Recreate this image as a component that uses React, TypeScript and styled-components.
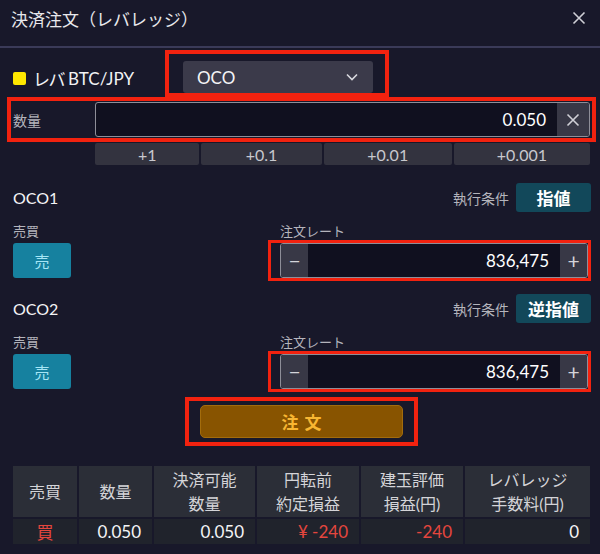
import * as React from 'react';
import styled, { createGlobalStyle } from 'styled-components';

const colors = {
  bg: '#18182a',
  line: '#3a3a58',
  text: '#e8e8ec',
  muted: '#b4b4bc',
  field: '#10101f',
  fieldBorder: '#8e8e98',
  control: '#383846',
  mark: '#f2220f',
  teal: '#12485a',
  sell: '#16819f',
  order: '#885400',
  loss: '#e4463e',
};

const GlobalStyle = createGlobalStyle`
  html, body {
    margin: 0;
    padding: 0;
    background: ${colors.bg};
  }
  body {
    font-family: Lato, 'Noto Sans CJK JP', sans-serif;
    color: ${colors.text};
  }
  * { box-sizing: border-box; }
`;

type Side = 'sell' | 'buy';

interface OcoLeg {
  name: string;
  condition: string;
  side: Side;
  rate: string;
}

const legs: OcoLeg[] = [
  { name: 'OCO1', condition: '指値', side: 'sell', rate: '836,475' },
  { name: 'OCO2', condition: '逆指値', side: 'sell', rate: '836,475' },
];

const steps = ['+1', '+0.1', '+0.01', '+0.001'];

const Close = () => (
  <svg width="14" height="14" viewBox="0 0 14 14">
    <path d="M1.5 1.5l11 11M12.5 1.5l-11 11" stroke="#cfcfd6" strokeWidth="1.6" />
  </svg>
);

const Chevron = () => (
  <svg width="12" height="8" viewBox="0 0 12 8">
    <path d="M1 1.5l5 5 5-5" stroke="#d8d8de" strokeWidth="1.6" fill="none" />
  </svg>
);

export default function App() {
  return (
    <Panel>
      <GlobalStyle />
      <Header>
        <Title>決済注文（レバレッジ）</Title>
        <CloseButton>
          <Close />
        </CloseButton>
      </Header>

      <SymbolRow>
        <Symbol>
          <Swatch />
          <span className="kana">レバ</span>
          <span>BTC/JPY</span>
        </Symbol>
        <Marked $pad="7px 12px 0 14px">
          <Select>
            OCO
            <Chevron />
          </Select>
        </Marked>
      </SymbolRow>

      <Marked $pad="1px 2px 1px 2px" $inset="0 4px 0 7px">
        <AmountRow>
          <FieldLabel>数量</FieldLabel>
          <Field>
            <FieldValue>0.050</FieldValue>
            <SideButton $wide>
              <Close />
            </SideButton>
          </Field>
        </AmountRow>
      </Marked>

      <Steps>
        {steps.map((s) => (
          <Step key={s}>{s}</Step>
        ))}
      </Steps>

      {legs.map((leg) => (
        <Leg key={leg.name}>
          <LegHead>
            <LegName>{leg.name}</LegName>
            <Condition>
              執行条件
              <ConditionButton>{leg.condition}</ConditionButton>
            </Condition>
          </LegHead>
          <LegBody>
            <Column>
              <SmallLabel>売買</SmallLabel>
              <SideToggle>{leg.side === 'sell' ? '売' : '買'}</SideToggle>
            </Column>
            <Column>
              <SmallLabel $indent>注文レート</SmallLabel>
              <Marked $pad="0 0 0 9px" $thin>
                <Field>
                  <SideButton>−</SideButton>
                  <FieldValue>{leg.rate}</FieldValue>
                  <SideButton>+</SideButton>
                </Field>
              </Marked>
            </Column>
          </LegBody>
        </Leg>
      ))}

      <OrderRow>
        <Marked $pad="4px 11px">
          <OrderButton>注文</OrderButton>
        </Marked>
      </OrderRow>

      <Positions>
        <colgroup>
          <col style={{ width: 65 }} />
          <col style={{ width: 75 }} />
          <col style={{ width: 103 }} />
          <col style={{ width: 104 }} />
          <col style={{ width: 104 }} />
          <col style={{ width: 126 }} />
        </colgroup>
        <thead>
          <tr>
            <th>売買</th>
            <th>数量</th>
            <th>
              決済可能
              <br />
              数量
            </th>
            <th>
              円転前
              <br />
              約定損益
            </th>
            <th>
              建玉評価
              <br />
              損益(円)
            </th>
            <th>
              レバレッジ
              <br />
              手数料(円)
            </th>
          </tr>
        </thead>
        <tbody>
          <tr>
            <Cell $center $loss>買</Cell>
            <Cell>0.050</Cell>
            <Cell>0.050</Cell>
            <Cell $loss>¥ -240</Cell>
            <Cell $loss>-240</Cell>
            <Cell>0</Cell>
          </tr>
        </tbody>
      </Positions>
    </Panel>
  );
}

const Panel = styled.div`
  width: 600px;
  height: 554px;
  background: ${colors.bg};
  overflow: hidden;
`;

const Header = styled.div`
  display: flex;
  align-items: center;
  justify-content: space-between;
  height: 48px;
  padding: 0 14px 10px 11px;
  border-bottom: 2px solid ${colors.line};
`;

const Title = styled.h1`
  margin: 0;
  font-size: 17px;
  font-weight: 400;
  color: ${colors.text};
`;

const CloseButton = styled.div`
  display: flex;
`;

const SymbolRow = styled.div`
  display: flex;
  align-items: flex-end;
  padding: 2px 0 0 13px;
  height: 49px;
`;

const Symbol = styled.div`
  width: 152px;
  display: flex;
  align-items: center;
  gap: 3px;
  align-self: center;
  margin-top: 10px;
  font-size: 17px;
  color: #f2f2f4;

  .kana {
    font-feature-settings: 'palt';
  }
`;

const Swatch = styled.span`
  width: 13px;
  height: 13px;
  border-radius: 2px;
  background: #ffe800;
  margin-right: 5px;
`;

const Marked = styled.div<{ $pad: string; $inset?: string; $thin?: boolean }>`
  border: ${(p) => (p.$thin ? 3 : 4)}px solid ${colors.mark};
  padding: ${(p) => p.$pad};
  margin: ${(p) => p.$inset ?? '0'};
`;

const Select = styled.div`
  width: 190px;
  height: 32px;
  display: flex;
  align-items: center;
  justify-content: space-between;
  padding: 0 15px 0 14px;
  border-radius: 3px;
  background: #3b3a4a;
  font-size: 17px;
  color: #f4f4f6;
`;

const AmountRow = styled.div`
  display: flex;
  align-items: center;
`;

const FieldLabel = styled.div`
  width: 82px;
  font-size: 14px;
  color: ${colors.muted};
`;

const Field = styled.div`
  flex: 1;
  height: 35px;
  display: flex;
  align-items: stretch;
  border: 1.5px solid ${colors.fieldBorder};
  border-radius: 3px;
  background: ${colors.field};
  overflow: hidden;
`;

const FieldValue = styled.div`
  flex: 1;
  display: flex;
  align-items: center;
  justify-content: flex-end;
  padding-right: 11px;
  font-size: 17px;
  color: #fff;
`;

const SideButton = styled.div<{ $wide?: boolean }>`
  width: ${(p) => (p.$wide ? 32 : 27)}px;
  display: flex;
  align-items: center;
  justify-content: center;
  background: ${colors.control};
  font-size: 21px;
  color: #d4d4da;
`;

const Steps = styled.div`
  display: grid;
  grid-template-columns: 105fr 121fr 129fr 137fr;
  gap: 2px;
  width: 495px;
  margin: 1px 0 0 95px;
`;

const Step = styled.div`
  height: 22px;
  display: flex;
  align-items: center;
  justify-content: center;
  border-radius: 2px;
  background: #33333f;
  font-size: 16px;
  color: #c8c8ce;
`;

const Leg = styled.section`
  padding: 0 9px 0 13px;
  margin-top: 18px;

  & + & {
    margin-top: 13px;
  }
`;

const LegHead = styled.div`
  display: flex;
  align-items: center;
  justify-content: space-between;
  height: 29px;
`;

const LegName = styled.div`
  font-size: 16px;
  color: #f4f4f6;
`;

const Condition = styled.div`
  display: flex;
  align-items: center;
  gap: 7px;
  font-size: 14px;
  color: ${colors.muted};
`;

const ConditionButton = styled.div`
  height: 29px;
  min-width: 75px;
  padding: 0 9px;
  display: flex;
  align-items: center;
  justify-content: center;
  border-radius: 3px;
  background: ${colors.teal};
  font-size: 17px;
  font-weight: 700;
  color: #fff;
`;

const LegBody = styled.div`
  display: grid;
  grid-template-columns: 255px 1fr;
  margin-top: 12px;
`;

const Column = styled.div`
  display: flex;
  flex-direction: column;
`;

const SmallLabel = styled.div<{ $indent?: boolean }>`
  height: 16px;
  line-height: 14px;
  padding-left: ${(p) => (p.$indent ? 12 : 0)}px;
  font-size: 13px;
  color: ${colors.muted};
`;

const SideToggle = styled.div`
  width: 58px;
  height: 35px;
  margin-top: 3px;
  display: flex;
  align-items: center;
  justify-content: center;
  border-radius: 3px;
  background: ${colors.sell};
  font-size: 15px;
  color: #a6e6f6;
`;

const OrderRow = styled.div`
  display: flex;
  padding-left: 185px;
  margin-top: 5px;
`;

const OrderButton = styled.div`
  width: 203px;
  height: 33px;
  display: flex;
  align-items: center;
  justify-content: center;
  border: 1px solid #a36c0c;
  border-radius: 5px;
  background: ${colors.order};
  font-size: 17px;
  font-weight: 700;
  letter-spacing: 6px;
  padding-left: 6px;
  color: #f8b632;
`;

const Positions = styled.table`
  width: 577px;
  margin: 20px 0 0 13px;
  border-collapse: collapse;
  table-layout: fixed;

  th {
    height: 52px;
    padding: 0;
    border: 2px solid ${colors.bg};
    border-top: 0;
    background: #2b2e37;
    font-size: 16px;
    font-weight: 400;
    line-height: 24px;
    color: #d4d4d8;
    text-align: center;
  }

  th:first-child {
    border-left: 0;
  }
  th:last-child {
    border-right: 0;
  }
`;

const Cell = styled.td<{ $center?: boolean; $loss?: boolean }>`
  height: 26px;
  padding: 0 11px 0 0;
  border: 2px solid ${colors.bg};
  border-bottom: 0;
  background: #20232c;
  font-size: 17px;
  text-align: ${(p) => (p.$center ? 'center' : 'right')};
  color: ${(p) => (p.$loss ? colors.loss : '#f4f4f6')};

  &:first-child {
    border-left: 0;
    padding: 0;
  }
  &:last-child {
    border-right: 0;
  }
`;
